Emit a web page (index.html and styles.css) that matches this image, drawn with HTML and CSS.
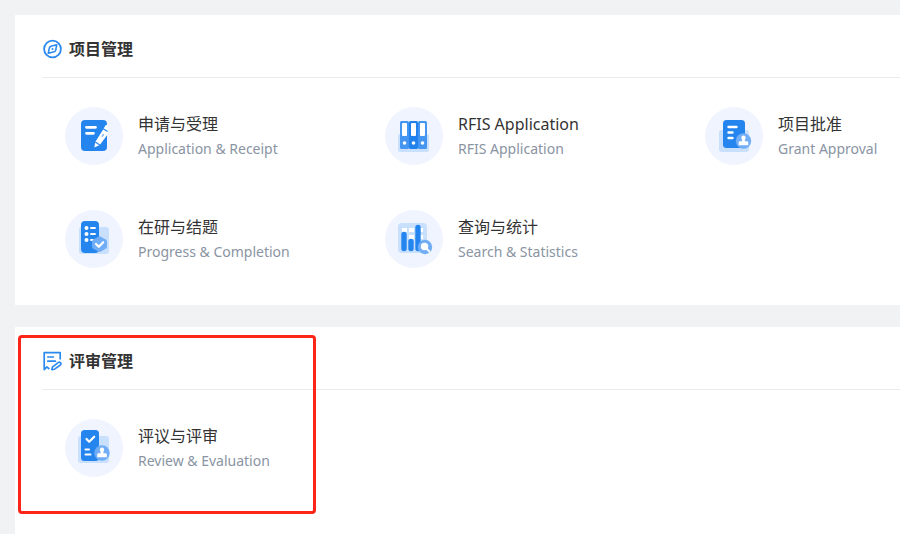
FILE: index.html
```html
<!DOCTYPE html>
<html lang="zh-CN">
<head>
    <meta charset="UTF-8">
    <meta name="viewport" content="width=device-width, initial-scale=1.0">
    <title>项目管理</title>
    <link rel="stylesheet" href="styles.css">
</head>
<body>
    <main>
        <!-- 项目管理 -->
        <section class="panel">
            <header class="panel-header">
                <svg class="panel-icon" viewBox="0 0 20 20" fill="none" stroke="#2b8af0" stroke-width="1.8">
                    <circle cx="9.5" cy="10" r="8.4"/>
                    <path d="M13.7 5.8 12.7 11.2Q12.3 12.4 11.2 12.8L5.3 14.2 6.4 8.8Q6.8 7.6 7.9 7.2Z" stroke-width="1.6" stroke-linejoin="round"/>
                    <circle cx="9.5" cy="10" r="1" fill="#2b8af0" stroke="none"/>
                </svg>
                <h2>项目管理</h2>
            </header>
            <div class="menu">
                <a class="menu-item" href="#">
                    <svg class="menu-icon" viewBox="0 0 58 58">
                        <circle cx="29" cy="29" r="29" fill="#eff4fe"/>
                        <rect x="16" y="13" width="26" height="31" rx="4" fill="#2585ee"/>
                        <path d="M21.5 20.3H30.5M21.5 26.3H28.5" stroke="#fff" stroke-width="2.8" stroke-linecap="round"/>
                        <path d="M29.3 40.5 30.3 35 38.6 21.8 40.4 18.4 42.5 17.5V27.5L34.8 38Z" fill="#fff"/>
                        <path d="M30.3 35 34.8 38M38.2 21.8 42.5 24.6" stroke="#2585ee" stroke-width="1.2"/>
                        <path d="M37 29.6 38.6 27.2" stroke="#7db6f6" stroke-width="1.6"/>
                    </svg>
                    <div class="menu-text">
                        <h3>申请与受理</h3>
                        <p>Application &amp; Receipt</p>
                    </div>
                </a>
                <a class="menu-item" href="#">
                    <svg class="menu-icon" viewBox="0 0 58 58">
                        <circle cx="29" cy="29" r="29" fill="#eff4fe"/>
                        <rect x="13" y="27" width="31" height="18" rx="2" fill="#c9e0fd"/>
                        <rect x="15" y="14" width="9" height="28" rx="1.5" fill="#4496f1"/>
                        <rect x="24" y="14" width="9" height="28" rx="1.5" fill="#2182ed"/>
                        <rect x="33" y="14" width="9" height="28" rx="1.5" fill="#4496f1"/>
                        <g fill="#fff">
                            <rect x="17" y="16" width="5" height="13" rx="1"/>
                            <rect x="26" y="16" width="5" height="13" rx="1"/>
                            <rect x="35" y="16" width="5" height="13" rx="1"/>
                            <circle cx="19.5" cy="36" r="1.8"/>
                            <circle cx="28.5" cy="36" r="1.8"/>
                            <circle cx="37.5" cy="36" r="1.8"/>
                        </g>
                    </svg>
                    <div class="menu-text">
                        <h3>RFIS Application</h3>
                        <p>RFIS Application</p>
                    </div>
                </a>
                <a class="menu-item" href="#">
                    <svg class="menu-icon" viewBox="0 0 58 58">
                        <circle cx="29" cy="29" r="29" fill="#eff4fe"/>
                        <rect x="14" y="23" width="30" height="22" rx="3" fill="#c9e0fd"/>
                        <rect x="18" y="13" width="22" height="28" rx="3.5" fill="#2585ee"/>
                        <path d="M23.5 20H31.5M23.5 25.5H27.5M23.5 31H27.5" stroke="#fff" stroke-width="2.4" stroke-linecap="round"/>
                        <circle cx="38.5" cy="34" r="7.7" fill="#71adf5"/>
                        <path d="M36.3 30.8a2.2 2.2 0 1 1 4.4 0q0 1-.8 1.9v1.5h2.2q1.2 0 1.2 1.2v2.8h-9.6v-2.8q0-1.2 1.2-1.2h2.2v-1.5q-.8-.9-.8-1.9Z" fill="#fff"/>
                    </svg>
                    <div class="menu-text">
                        <h3>项目批准</h3>
                        <p>Grant Approval</p>
                    </div>
                </a>
                <a class="menu-item" href="#">
                    <svg class="menu-icon" viewBox="0 0 58 58">
                        <circle cx="29" cy="29" r="29" fill="#eff4fe"/>
                        <rect x="14" y="17" width="30" height="27" rx="3" fill="#c9e0fd"/>
                        <rect x="16" y="11" width="18" height="32" rx="4" fill="#2585ee"/>
                        <g fill="#fff">
                            <circle cx="21.5" cy="18" r="2"/>
                            <circle cx="21.5" cy="24" r="2"/>
                            <circle cx="21.5" cy="30" r="2"/>
                        </g>
                        <path d="M26 18H30M26 24H30M26 30H29" stroke="#fff" stroke-width="1.8" stroke-linecap="round"/>
                        <path d="M33.2 26.7q1.3-.7 2.6 0l5 2.9q1.2.7 1.2 2.1v5q0 1.4-1.2 2.1l-5 2.8q-1.3.7-2.6 0l-5-2.8q-1.2-.7-1.2-2.1v-5q0-1.4 1.2-2.1Z" fill="#71adf5"/>
                        <path d="m31 34 2.8 2.8 4.4-4.6" fill="none" stroke="#fff" stroke-width="2.2" stroke-linecap="round" stroke-linejoin="round"/>
                    </svg>
                    <div class="menu-text">
                        <h3>在研与结题</h3>
                        <p>Progress &amp; Completion</p>
                    </div>
                </a>
                <a class="menu-item" href="#">
                    <svg class="menu-icon" viewBox="0 0 58 58">
                        <circle cx="29" cy="29" r="29" fill="#eff4fe"/>
                        <rect x="13" y="13" width="29" height="30" rx="4" fill="#c9e0fd"/>
                        <path d="M17 18H22V22H17ZM24 18H29V22H24ZM31 18H38V22H31ZM24 25H29V29H24ZM31 25H38V29H31Z" fill="#fff"/>
                        <path d="M19 24.5V38.5M26 31.5V38.5M33 17.5V38.5" stroke="#2585ee" stroke-width="5.4" stroke-linecap="round"/>
                        <circle cx="40" cy="37" r="7.2" fill="#71adf5"/>
                        <path d="m42 39 2.2 2.4" stroke="#fff" stroke-width="2" stroke-linecap="round"/>
                        <circle cx="39.5" cy="36.5" r="3.7" fill="#fff"/>
                    </svg>
                    <div class="menu-text">
                        <h3>查询与统计</h3>
                        <p>Search &amp; Statistics</p>
                    </div>
                </a>
            </div>
        </section>

        <!-- 评审管理 -->
        <section class="panel panel-review">
            <header class="panel-header">
                <svg class="panel-icon" viewBox="0 0 20 20" fill="none" stroke="#2b8af0" stroke-width="1.7" stroke-linejoin="round">
                    <path d="M6.4 18 3.8 15.8 1.2 18.6V1.6H17.2V8.6"/>
                    <path d="M4.8 6H10.4M4.8 10.2H12.4" stroke-linecap="round"/>
                    <path d="M8.8 18.6 9.4 16.2 15.4 11.4Q16.6 10.8 17.6 11.9T17.4 14L11.6 18.2Z" stroke-width="1.6"/>
                </svg>
                <h2>评审管理</h2>
            </header>
            <div class="menu">
                <a class="menu-item" href="#">
                    <svg class="menu-icon" viewBox="0 0 58 58">
                        <circle cx="29" cy="29" r="29" fill="#eff4fe"/>
                        <rect x="13" y="17" width="31" height="27" rx="3" fill="#c9e0fd"/>
                        <rect x="16" y="11" width="18" height="31" rx="3.5" fill="#2585ee"/>
                        <path d="m21.5 20 2.7 2.7 5-5" fill="none" stroke="#fff" stroke-width="2.2" stroke-linecap="round" stroke-linejoin="round"/>
                        <path d="M20.5 30.5H24M20.5 35.5H25.5" stroke="#fff" stroke-width="2" stroke-linecap="round"/>
                        <circle cx="37" cy="34" r="7.7" fill="#71adf5"/>
                        <path d="M34.8 30.8a2.2 2.2 0 1 1 4.4 0q0 1-.8 1.9v1.5h2.2q1.2 0 1.2 1.2v2.8h-9.6v-2.8q0-1.2 1.2-1.2h2.2v-1.5q-.8-.9-.8-1.9Z" fill="#fff"/>
                    </svg>
                    <div class="menu-text">
                        <h3>评议与评审</h3>
                        <p>Review &amp; Evaluation</p>
                    </div>
                </a>
            </div>
            <div class="highlight"></div>
        </section>
    </main>
</body>
</html>
```
FILE: styles.css
```css
* {
    box-sizing: border-box;
}
body {
    margin: 0;
    font-family: "Noto Sans", "Noto Sans CJK SC", sans-serif;
    background: #f0f2f4;
    color: #333;
}
main {
    display: flex;
    flex-direction: column;
    gap: 22px;
    min-height: 100vh;
    padding: 15px 0 0 15px;
}
h2, h3, p {
    margin: 0;
}
.panel {
    position: relative;
    padding-left: 28px;
    background: #fff;
}
.panel-review {
    flex: 1;
}
.panel-header {
    display: flex;
    align-items: center;
    gap: 6px;
    padding: 22px 0 16px;
    border-bottom: 1px solid #e8eaec;
}
.panel-header h2 {
    font-size: 16px;
    line-height: 24px;
    font-weight: bold;
}
.panel-icon {
    width: 20px;
    height: 20px;
}
.menu {
    display: grid;
    grid-template-columns: 320px 320px 1fr;
    row-gap: 45px;
    padding: 29px 0 37px 22px;
}
.menu-item {
    display: flex;
    align-items: center;
    gap: 15px;
    color: #333;
    text-decoration: none;
    white-space: nowrap;
}
.menu-icon {
    flex: none;
    width: 58px;
    height: 58px;
}
.menu-text h3 {
    font-size: 16px;
    line-height: 26px;
    font-weight: normal;
}
.menu-text p {
    font-size: 14px;
    line-height: 24px;
    color: #8a94a3;
}
/* red frame around the review entry */
.highlight {
    position: absolute;
    top: 8px;
    left: 3px;
    width: 298px;
    height: 179px;
    border: 3px solid #fd2518;
    border-radius: 4px;
    pointer-events: none;
}
```
